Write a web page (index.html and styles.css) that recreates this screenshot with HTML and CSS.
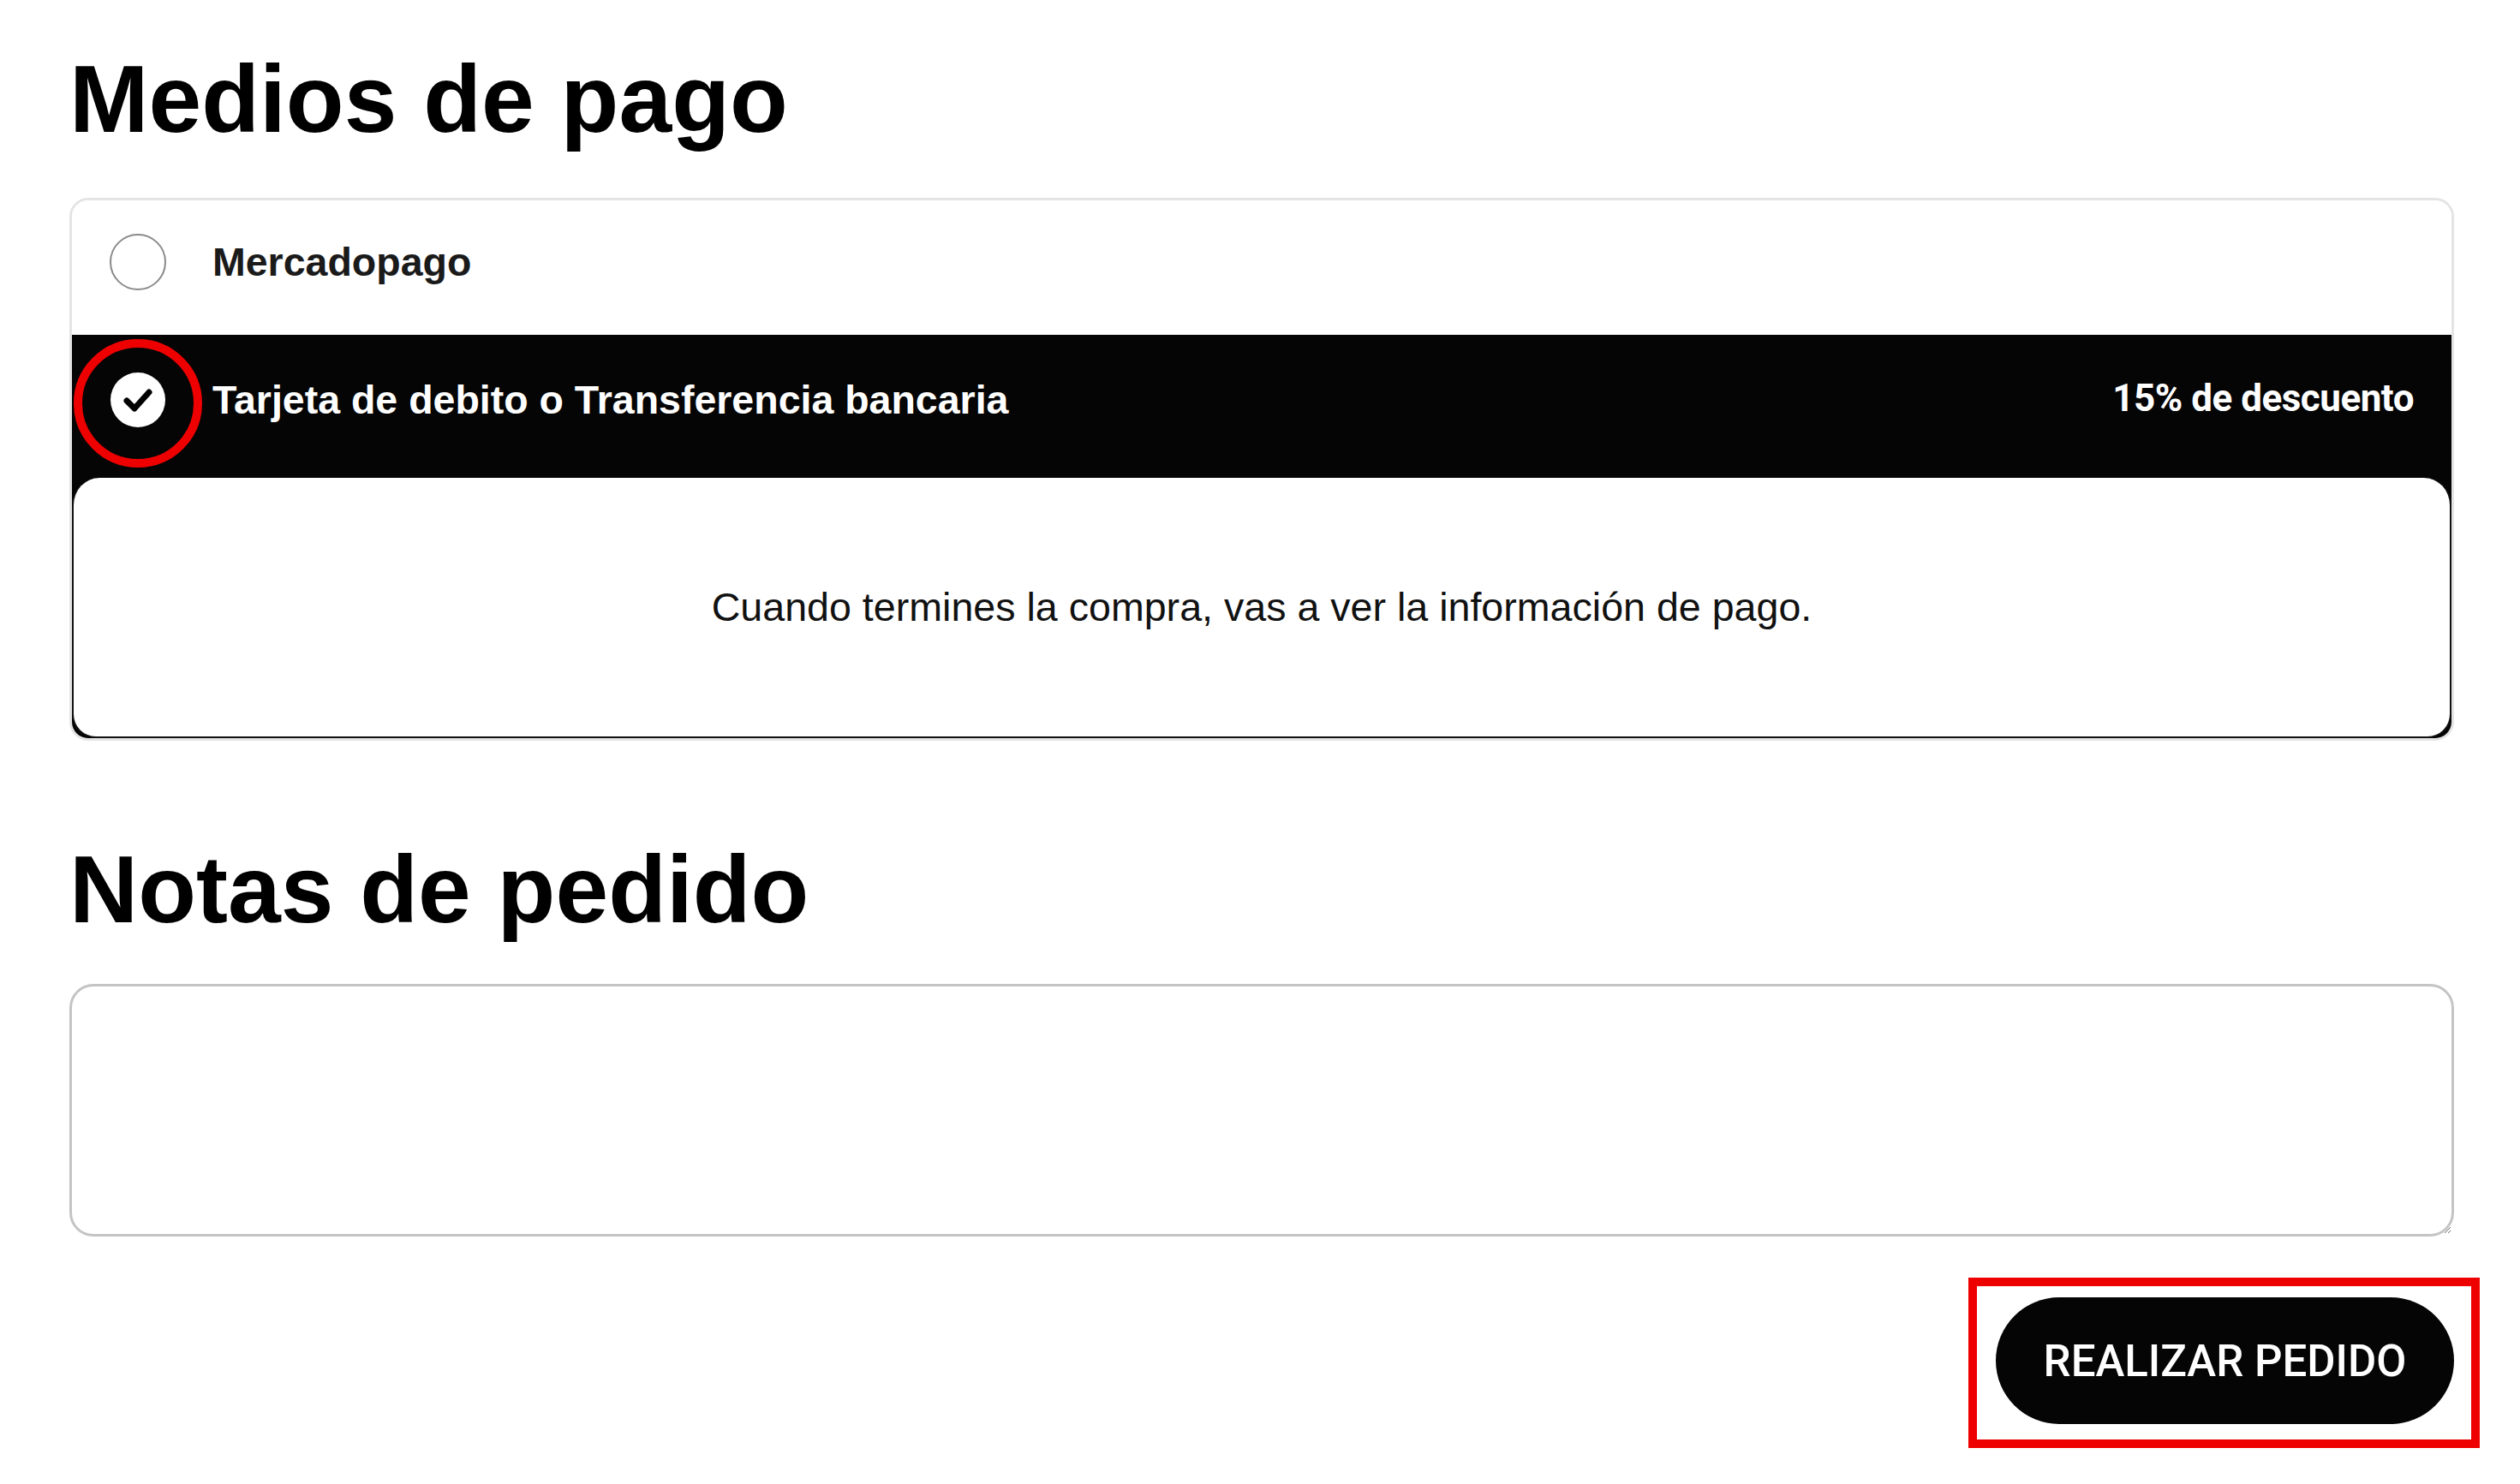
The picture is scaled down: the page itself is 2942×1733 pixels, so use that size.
FILE: index.html
```html
<!DOCTYPE html>
<html lang="es">
<head>
<meta charset="utf-8">
<title>Medios de pago</title>
<link rel="stylesheet" href="styles.css">
</head>
<body>
<main class="page">
  <h2 class="title">Medios de pago</h2>
  <div class="pay-box">
    <div class="option">
      <span class="radio"></span>
      <span class="opt-label">Mercadopago</span>
    </div>
    <div class="option selected">
      <div class="opt-head">
        <span class="check">
          <svg viewBox="0 0 66 66" width="66" height="66"><circle cx="33" cy="33" r="32" fill="#fff"/><path d="M20 34 L29 43 L46 24" fill="none" stroke="#000" stroke-width="7" stroke-linecap="round" stroke-linejoin="round"/></svg>
          <span class="ring"></span>
        </span>
        <span class="opt-label light">Tarjeta de debito o Transferencia bancaria</span>
        <span class="discount">15% de descuento</span>
      </div>
      <div class="panel">Cuando termines la compra, vas a ver la información de pago.</div>
    </div>
  </div>
  <h2 class="title notes-title">Notas de pedido</h2>
  <textarea class="notes"></textarea>
  <div class="actions">
    <div class="btn-wrap">
      <button class="submit">REALIZAR PEDIDO</button>
      <span class="frame"></span>
    </div>
  </div>
</main>
</body>
</html>
```

FILE: styles.css
```css
html, body {
  margin: 0;
  padding: 0;
  background: #ffffff;
}
body {
  font-family: "Liberation Sans", Arial, sans-serif;
  color: #000;
}
.page {
  padding: 52px 77px 40px 81px;
  display: flex;
  flex-direction: column;
}
.title {
  margin: 0;
  font-size: 111px;
  line-height: 128px;
  font-weight: 700;
  color: #000;
}
.pay-box {
  margin-top: 51px;
  border: 3px solid #e4e4e4;
  border-radius: 22px;
  overflow: hidden;
  display: flex;
  flex-direction: column;
}
.option {
  height: 157px;
  box-sizing: border-box;
  display: flex;
  align-items: center;
  padding: 0 44px 14px;
  gap: 54px;
  background: #fff;
}
.radio {
  width: 62px;
  height: 62px;
  border: 2px solid #8a8a8a;
  border-radius: 50%;
  flex: none;
}
.opt-label {
  font-size: 46.5px;
  font-weight: 700;
  color: #1a1a1a;
}
.opt-label.light {
  color: #fff;
  flex: 1;
}
.option.selected {
  height: auto;
  padding: 0;
  display: flex;
  flex-direction: column;
  align-items: stretch;
  gap: 0;
  background: #050505;
}
.opt-head {
  height: 167px;
  box-sizing: border-box;
  display: flex;
  align-items: center;
  padding: 0 44px 16px;
  gap: 54px;
}
.check {
  position: relative;
  width: 66px;
  height: 66px;
  flex: none;
  display: block;
}
.check svg {
  display: block;
}
.ring {
  position: absolute;
  left: -42px;
  top: -38px;
  width: 130px;
  height: 130px;
  border: 10px solid #ee0000;
  border-radius: 50%;
}
.discount {
  font-family: Roboto, "Liberation Sans", sans-serif;
  font-weight: 700;
  font-size: 44px;
  color: #fff;
  letter-spacing: -0.5px;
  margin-top: -4px;
}
.panel {
  height: 302px;
  background: #fff;
  border: 2px solid #111;
  border-top: none;
  border-radius: 32px 32px 28px 28px;
  box-shadow: 0 3px 3px rgba(0,0,0,0.35);
  display: flex;
  align-items: center;
  justify-content: center;
  font-size: 46.6px;
  color: #111;
}
.notes-title {
  margin-top: 110px;
}
.notes {
  margin-top: 46px;
  height: 295px;
  box-sizing: border-box;
  border: 3px solid #c4c4c4;
  border-radius: 28px;
  background: #fff;
  resize: vertical;
  font-family: "Liberation Sans", Arial, sans-serif;
  font-size: 40px;
  outline: none;
}
.actions {
  margin-top: 71px;
  display: flex;
  justify-content: flex-end;
}
.btn-wrap {
  position: relative;
}
.submit {
  display: block;
  width: 535px;
  height: 148px;
  border: none;
  border-radius: 74px;
  background: #050505;
  color: #fff;
  font-family: Roboto, "Liberation Sans", sans-serif;
  font-size: 51px;
  font-weight: 500;
  padding: 0;
}
.frame {
  position: absolute;
  left: -32px;
  top: -23px;
  right: -30px;
  bottom: -28px;
  border: 10px solid #ee0000;
}
```
